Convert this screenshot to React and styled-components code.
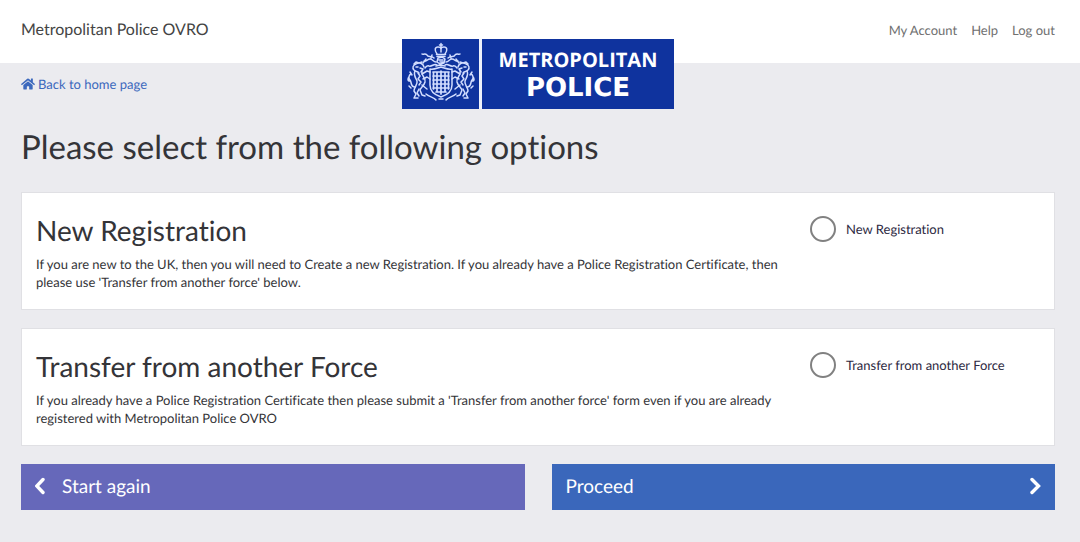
import React, { useState } from "react";
import styled, { createGlobalStyle } from "styled-components";
import { FaHome } from "react-icons/fa";

const NAV_H = 63;
const GUTTER = 14;

const colors = {
	page: "#ebebef",
	panel: "#ffffff",
	border: "#e0e0e4",
	text: "#343438",
	muted: "#707070",
	link: "#3c68bd",
	radioText: "#2d2942",
	back: "#6668ba",
	next: "#3a67bb",
	brand: "#0f339e",
};

const GlobalStyle = createGlobalStyle`
	*, *::before, *::after {
		box-sizing: border-box;
	}
	body {
		margin: 0;
		background: ${colors.page};
		color: ${colors.text};
		font-family: Lato, "Liberation Sans", sans-serif;
		font-size: 13px;
		line-height: 18px;
		font-variant-ligatures: none;
		text-rendering: geometricPrecision;
	}
	a {
		text-decoration: none;
	}
	a:hover {
		text-decoration: underline;
	}
`;

const Header = styled.header`
	position: relative;
	height: ${NAV_H}px;
	padding: 0 25px 4px 21px;
	display: flex;
	align-items: center;
	justify-content: space-between;
	background: ${colors.panel};
`;

const SiteName = styled.a`
	font-size: 16px;
	line-height: 24px;
	color: #444444;
`;

const Nav = styled.nav`
	display: flex;
	gap: ${GUTTER}px;
`;

const NavLink = styled.a`
	color: ${colors.muted};
`;

/* hangs over the bottom edge of the header */
const Logo = styled.a`
	position: absolute;
	top: 39px;
	left: calc(50% - 2px);
	transform: translateX(-50%);
	display: flex;
	gap: 3px;
	height: 70px;
	background: #eef1fa;
`;

const CrestBox = styled.span`
	width: 77px;
	background: ${colors.brand};
	svg {
		display: block;
	}
`;

const Wordmark = styled.span`
	width: 192px;
	display: flex;
	flex-direction: column;
	align-items: center;
	justify-content: center;
	gap: 3px;
	background: ${colors.brand};
	color: #ffffff;
	font-weight: 700;
`;

const WordTop = styled.span`
	font-family: "Open Sans", "Noto Sans", sans-serif;
	font-size: 20px;
	line-height: 24px;
`;

const WordBottom = styled.span`
	font-family: "DejaVu Sans", sans-serif;
	font-size: 26px;
	line-height: 26px;
`;

const Main = styled.main`
	padding: 12px 25px 32px 21px;
`;

const BackLink = styled.a`
	display: inline-flex;
	align-items: center;
	gap: 3px;
	color: ${colors.link};
`;

const PageTitle = styled.h1`
	margin: 31px 0 24px;
	font-size: 33px;
	line-height: 42px;
	font-weight: 400;
`;

const Card = styled.section`
	display: grid;
	grid-template-columns: 3fr 1fr;
	margin-bottom: 18px;
	padding: 20px 0 18px;
	background: ${colors.panel};
	border: 1px solid ${colors.border};
`;

const CardText = styled.div`
	padding: 0 ${GUTTER}px;
	h2 {
		margin: 0 0 8px;
		font-size: 28px;
		line-height: 34px;
		font-weight: 400;
	}
	p {
		margin: 0;
	}
`;

const RadioLabel = styled.label`
	display: flex;
	align-items: center;
	gap: 10px;
	height: 32px;
	padding: 0 ${GUTTER}px;
	color: ${colors.radioText};
	cursor: pointer;
`;

const Radio = styled.input`
	appearance: none;
	flex: none;
	width: 26px;
	height: 26px;
	margin: 0;
	border: 2px solid #818181;
	border-radius: 50%;
	background: ${colors.panel};
	&:checked {
		background: radial-gradient(${colors.next} 48%, ${colors.panel} 54%);
	}
`;

const Actions = styled.div`
	display: grid;
	grid-template-columns: 1fr 1fr;
	gap: 27px;
`;

const ActionButton = styled.button`
	display: flex;
	align-items: center;
	justify-content: ${({ $next }) => ($next ? "space-between" : "flex-start")};
	gap: 16px;
	height: 46px;
	padding: 0 ${GUTTER}px;
	border: 0;
	background: ${({ $next }) => ($next ? colors.next : colors.back)};
	color: #ffffff;
	font-family: inherit;
	font-size: 19px;
	line-height: 24px;
	text-rendering: inherit;
	cursor: pointer;
`;

const options = [
	{
		id: "new",
		title: "New Registration",
		text: "If you are new to the UK, then you will need to Create a new Registration. If you already have a Police Registration Certificate, then please use 'Transfer from another force' below.",
	},
	{
		id: "transfer",
		title: "Transfer from another Force",
		text: "If you already have a Police Registration Certificate then please submit a 'Transfer from another force' form even if you are already registered with Metropolitan Police OVRO",
	},
];

function Chevron({ right }) {
	return (
		<svg width="11" height="20" viewBox="0 0 11 20" aria-hidden="true">
			<path
				d={right ? "M2 2.5 8.5 9 2 15.5" : "M8 2.5 1.8 9 8 15.5"}
				fill="none"
				stroke="currentColor"
				strokeWidth="3.4"
				strokeLinecap="round"
				strokeLinejoin="miter"
			/>
		</svg>
	);
}

/* one side of the arms: lion supporter and mantling */
function Supporter() {
	return (
		<>
			<path d="M34 23c-3 0-3-3-6-3s-3 3-6 2M32 19c-3-3-6 0-7-3-2-2-4 0-5-1M35 26c-3-2-5 2-8 1-2-1-3 1-4 2M30 16l-1 3M24 20l-3 4" />
			<path d="M22 28c-1-4-5-5-8-3-3 1-4 4-2 6 1 2 4 1 5 3M14 28h2M18 29l3 1-2 3M12 25l2-2 3 1 3-1" />
			<path d="M13 32c-2 4 1 7 2 10 1 4-3 6-3 10l2 3-2 4h4M20 33c-1 4 4 5 3 10-1 4-4 5-5 8l2 5 3 1" />
			<path d="M20 35l5-3 3 1M21 40l4-2 3 2M16 34l2 3-2 3 3 3-2 3M20 46l5 4M17 50l-2 4 2 3" />
			<path d="M13 48c-5 0-3-5-5-7-2-2-1-5 1-6M8 42c-3 0-2-3-1-4M10 36l-2-3M9 49l-2-2" />
		</>
	);
}

function Crest() {
	return (
		<svg width="77" height="70" viewBox="0 0 77 70" aria-hidden="true">
			<g
				fill="none"
				stroke="#d3deff"
				strokeWidth="1.5"
				strokeLinecap="round"
				strokeLinejoin="round"
			>
				<Supporter />
				<g transform="matrix(-1 0 0 1 78 0)">
					<Supporter />
				</g>
				{/* crown */}
				<path d="M39 4.500v3M37.500 6h3M35 15c-3-4-2-7 1-7 2 0 3 1 3 2 0-1 1-2 3-2 3 0 4 3 1 7M39 10v3M34.500 15.500h9M35 17.500h8" />
				{/* helm */}
				<path d="M36 19l-1 4 3 2 4-1 1-4-3-2zM37 21h4M38 23h3M34 27l4-1 5 1" />
				{/* shield */}
				<path d="M28 30c4 1 7-1 11-2 4 1 7 3 11 2v16c0 6-5 10-11 12-6-2-11-6-11-12z" />
				<path
					strokeWidth="1.7"
					d="M31.500 33v17M35 33v20M39 32v23M43 33v20M46.500 33v17M31 33h16M31 37h16M31 41h16M31 45h16M31 49h16M34 53h10"
				/>
				<path d="M24 55c3 3 8 3 10 6M54 55c-3 3-8 3-10 6M37 60h4" />
			</g>
		</svg>
	);
}

export default function App() {
	const [choice, setChoice] = useState("");

	return (
		<>
			<GlobalStyle />
			<Header>
				<SiteName href="#">Metropolitan Police OVRO</SiteName>
				<Nav>
					<NavLink href="#account">My Account</NavLink>
					<NavLink href="#help">Help</NavLink>
					<NavLink href="#logout">Log out</NavLink>
				</Nav>
				<Logo href="#">
					<CrestBox>
						<Crest />
					</CrestBox>
					<Wordmark>
						<WordTop>METROPOLITAN</WordTop>
						<WordBottom>POLICE</WordBottom>
					</Wordmark>
				</Logo>
			</Header>

			<Main>
				<BackLink href="#home">
					<FaHome size={14} />
					Back to home page
				</BackLink>
				<PageTitle>Please select from the following options</PageTitle>

				{options.map((o) => (
					<Card key={o.id}>
						<CardText>
							<h2>{o.title}</h2>
							<p>{o.text}</p>
						</CardText>
						<RadioLabel htmlFor={o.id}>
							<Radio
								type="radio"
								name="option"
								id={o.id}
								checked={choice === o.id}
								onChange={() => setChoice(o.id)}
							/>
							{o.title}
						</RadioLabel>
					</Card>
				))}

				<Actions>
					<ActionButton type="button" onClick={() => setChoice("")}>
						<Chevron />
						Start again
					</ActionButton>
					<ActionButton type="button" $next>
						Proceed
						<Chevron right />
					</ActionButton>
				</Actions>
			</Main>
		</>
	);
}
